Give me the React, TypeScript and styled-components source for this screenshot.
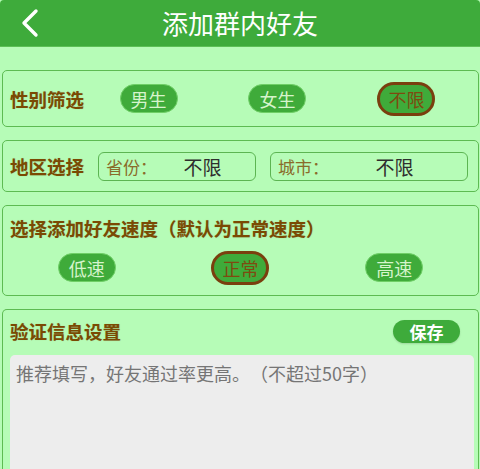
import styled, { createGlobalStyle } from "styled-components";

const GlobalStyle = createGlobalStyle`
  html, body {
    margin: 0;
    padding: 0;
    background: #b6fcb7;
    font-family: "Noto Sans CJK SC", "Noto Sans", sans-serif;
    text-spacing-trim: space-all;
  }
`;

const genderList = ["男生", "女生", "不限"];
const speedList = ["低速", "正常", "高速"];

export default function App() {
  //选中项写死：不限 / 正常
  return (
    <Page>
      <GlobalStyle />
      <Header>
        <BackButton>
          <svg width="22" height="30" viewBox="0 0 22 30">
            <polyline points="16,3 4,15 16,27" fill="none" stroke="#fff" strokeWidth="3.4" strokeLinecap="round" strokeLinejoin="round" />
          </svg>
        </BackButton>
        <h1>添加群内好友</h1>
      </Header>

      <Content>
        <Card>
          <Row $height={55}>
            <Title>性别筛选</Title>
            <Options>
              {genderList.map((g) => (
                <Pill key={g} $active={g === "不限"}>{g}</Pill>
              ))}
            </Options>
          </Row>
        </Card>

        <Card>
          <Row $height={50}>
            <Title>地区选择</Title>
            <SelectBox $width={158}>
              <span>省份：</span>
              <strong>不限</strong>
            </SelectBox>
            <SelectBox $width={198}>
              <span>城市：</span>
              <strong>不限</strong>
            </SelectBox>
          </Row>
        </Card>

        <SpeedCard>
          <Row $height={44}>
            <Title>选择添加好友速度（默认为正常速度）</Title>
          </Row>
          <Row $height={35}>
            <Options>
              {speedList.map((s) => (
                <Pill key={s} $active={s === "正常"}>{s}</Pill>
              ))}
            </Options>
          </Row>
        </SpeedCard>

        <VerifyCard>
          <Row $height={45}>
            <Title>验证信息设置</Title>
            <SaveButton>保存</SaveButton>
          </Row>
          <MessageInput placeholder="推荐填写，好友通过率更高。（不超过50字）" />
        </VerifyCard>
      </Content>
    </Page>
  );
}

//Styled Components
const Page = styled.div`
  width: 480px;
  height: 469px;
  overflow: hidden;
  background: #b6fcb7;
`;

const Header = styled.header`
  position: relative;
  height: 46px;
  background: #3eab3b;
  border-radius: 4px 4px 0 0;
  border-bottom: 1px solid #5cc055;
  display: flex;
  align-items: center;
  justify-content: center;

  h1 {
    margin: 0;
    font-size: 26px;
    font-weight: 400;
    color: #ffffff;
    line-height: 46px;
  }
`;

const BackButton = styled.div`
  position: absolute;
  left: 20px;
  top: 8px;
  width: 22px;
  height: 30px;
  display: flex;
`;

const Content = styled.main`
  padding: 23px 1px 0 2px;
  display: flex;
  flex-direction: column;
  gap: 13px;
`;

const Card = styled.section`
  border: 1px solid #5dbb52;
  border-radius: 5px;
  padding: 0 7px;
  box-sizing: border-box;
`;

const Row = styled.div<{ $height: number }>`
  height: ${(p) => p.$height}px;
  display: flex;
  align-items: center;
`;

const Title = styled.span`
  font-size: 18.5px;
  font-weight: 700;
  color: #7a4a03;
  line-height: 24px;
  white-space: nowrap;
  text-shadow: 0 0 1px rgba(122, 74, 3, 0.3);
`;

const Options = styled.div`
  flex: 1;
  display: flex;
  align-items: center;
  justify-content: space-around;
`;

const Pill = styled.div<{ $active?: boolean }>`
  height: ${(p) => (p.$active ? "34px" : "29px")};
  padding: 0 ${(p) => (p.$active ? "8px" : "10px")};
  box-sizing: border-box;
  border-radius: 17px;
  background: #3fab3a;
  border: ${(p) => (p.$active ? "3px solid #7a3f0e" : "1px solid #6fcf66")};
  color: ${(p) => (p.$active ? "#7e4a10" : "#d6f4cc")};
  font-size: 18px;
  line-height: 1;
  display: flex;
  align-items: center;
  justify-content: center;
`;

const SelectBox = styled.div<{ $width: number }>`
  width: ${(p) => p.$width}px;
  height: 29px;
  margin-left: 14px;
  box-sizing: border-box;
  border: 1.5px solid #5cb552;
  border-radius: 6px;
  padding: 0 7px;
  display: flex;
  align-items: center;

  span {
    font-size: 17px;
    color: #8a6b2a;
  }

  strong {
    flex: 1;
    text-align: center;
    font-size: 19px;
    font-weight: 400;
    color: #2e2e2e;
  }
`;

const SpeedCard = styled(Card)`
  padding-bottom: 10px;
`;

const VerifyCard = styled(Card)`
  height: 180px;
  border-bottom: none;
  display: flex;
  flex-direction: column;
  justify-content: flex-start;

  ${Row} {
    justify-content: space-between;
    padding-right: 11px;
  }
`;

const SaveButton = styled.button`
  width: 67px;
  height: 23px;
  border: none;
  border-radius: 12px;
  background: #3eab3b;
  color: #ffffff;
  font-family: inherit;
  font-size: 17px;
  font-weight: 700;
  line-height: 23px;
  padding: 0;
  box-shadow: 0 1px 2px rgba(0, 0, 0, 0.15);
`;

const MessageInput = styled.textarea`
  display: block;
  margin-top: 2px;
  width: 464px;
  height: 140px;
  box-sizing: border-box;
  border: none;
  border-radius: 5px;
  background: #ededed;
  padding: 5px 6px;
  resize: none;
  font-family: inherit;
  font-size: 18px;
  color: #333;

  ::placeholder {
    color: #9b9b9b;
  }
`;
